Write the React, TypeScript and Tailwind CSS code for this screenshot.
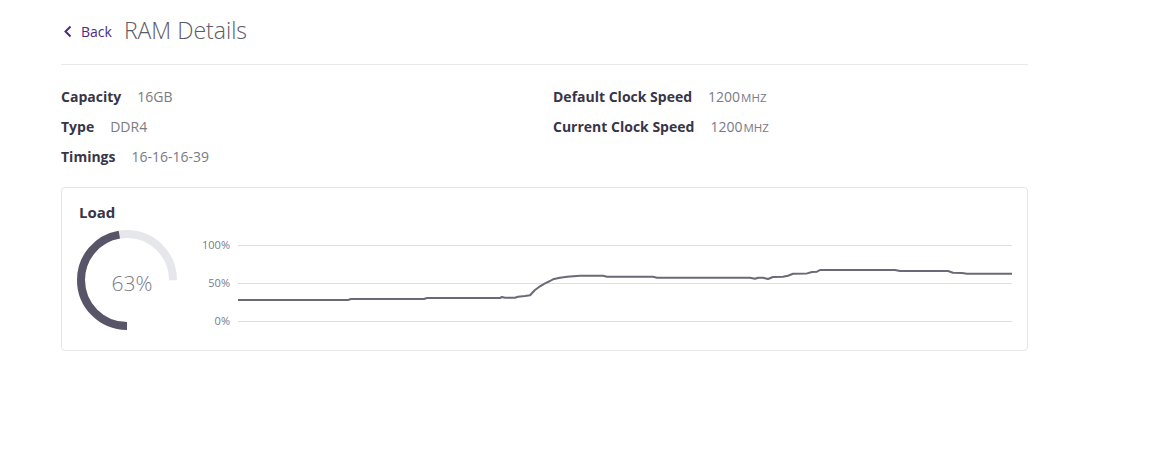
import React from "react";

const pts: [number, number][] = [
  [238, 300], [348, 300], [351, 299], [424, 299], [427, 298], [500, 298], [502, 297], [505, 297.7],
  [515, 297.7], [518, 296.7], [525, 296], [530, 295.3], [535, 290], [540, 286.3], [545, 283.3],
  [550, 281], [553, 279.3], [560, 277.8], [567, 276.7], [580, 275.7], [603, 275.7], [607, 276.7],
  [653, 276.7], [657, 277.7], [750, 277.7], [755, 278.7], [758, 277.7], [763, 277.7], [768, 279],
  [773, 277], [783, 276.7], [788, 275.7], [793, 273.7], [807, 273.4], [812, 272], [817, 271.7],
  [820, 270], [895, 270], [900, 271], [948, 271], [953, 272.7], [962, 273], [967, 273.7], [1012, 273.7],
];

function Gauge({ value }: { value: number }) {
  const r = 46;
  const c = 2 * Math.PI * r;
  const arc = c * 0.75;
  const filled = arc * (value / 100);
  return (
    <div className="relative w-[100px] h-[100px] shrink-0">
      <svg width="100" height="100" viewBox="0 0 100 100">
        <g transform="rotate(90 50 50)">
          <circle cx="50" cy="50" r={r} fill="none" stroke="#e6e7eb" strokeWidth="8"
            strokeDasharray={`${arc} ${c}`} />
          <circle cx="50" cy="50" r={r} fill="none" stroke="#595569" strokeWidth="8"
            strokeDasharray={`${filled} ${c}`} />
        </g>
      </svg>
      <div className="absolute inset-0 flex items-center justify-center pl-[10px] pt-[8px] text-[21px] font-light text-[#7b7a85]">
        63%
      </div>
    </div>
  );
}

function Chart() {
  const ox = 196;
  const oy = 230;
  const d = pts.map(([x, y], i) => `${i ? "L" : "M"}${x - ox} ${y - oy}`).join(" ");
  return (
    <svg width="816" height="100" viewBox="0 0 816 100" className="block ml-[19px]">
      {[
        [15, "100%"],
        [53, "50%"],
        [91, "0%"],
      ].map(([y, l]) => (
        <g key={l as string}>
          <line x1="42" x2="816" y1={(y as number) + 0.5} y2={(y as number) + 0.5} stroke="#dedede" strokeWidth="1" />
          <text x="34" y={(y as number) + 4} textAnchor="end" fontSize="11" fill="#7b7a85"
            style={{ fontFamily: '"Open Sans", sans-serif' }}>
            {l}
          </text>
        </g>
      ))}
      <path d={d} fill="none" stroke="#6b6975" strokeWidth="2" strokeLinejoin="round" />
    </svg>
  );
}

function Row({ label, value }: { label: string; value: React.ReactNode }) {
  return (
    <div className="flex items-center h-[30px] gap-4">
      <span className="font-bold text-[#383549]">{label}</span>
      <span className="text-[#7b7a85]">{value}</span>
    </div>
  );
}

const mhz = (
  <>
    1200<span className="uppercase text-[11.5px] ml-[1px]">MHz</span>
  </>
);

export default function App() {
  return (
    <div className="min-h-[472px] w-[1156px] bg-white font-['Open_Sans',sans-serif] text-[14px]">
      <div className="ml-[61px] w-[967px] pt-[15px]">
        <div className="flex items-center h-[30px] pb-0 gap-[12px]">
          <button className="flex items-center gap-[8px] text-[#4e2a84] text-[14px] ml-[2px] mt-[2px]">
            <svg width="10" height="13" viewBox="0 0 10 13">
              <path d="M7.5 1.5 L2.5 6.5 L7.5 11.5" fill="none" stroke="#4e2a84" strokeWidth="2" />
            </svg>
            Back
          </button>
          <h1 className="text-[23px] font-light text-[#5b5b66] leading-[30px]">RAM Details</h1>
        </div>
        <div className="mt-[19px] border-b border-[#e8e8e8]" />
        <div className="grid grid-cols-[492px_1fr] mt-[16px]">
          <div>
            <Row label="Capacity" value="16GB" />
            <Row label="Type" value="DDR4" />
            <Row label="Timings" value="16-16-16-39" />
          </div>
          <div>
            <Row label="Default Clock Speed" value={mhz} />
            <Row label="Current Clock Speed" value={mhz} />
          </div>
        </div>
        <div className="mt-[16px] border border-[#e6e6e6] rounded-[4px] pt-[14px] pb-[20px] pl-[17px] pr-[15px]">
          <div className="text-[15px] font-bold text-[#383549] leading-[20px]">Load</div>
          <div className="flex mt-[8px] -ml-[2px]">
            <Gauge value={63} />
            <Chart />
          </div>
        </div>
      </div>
    </div>
  );
}
